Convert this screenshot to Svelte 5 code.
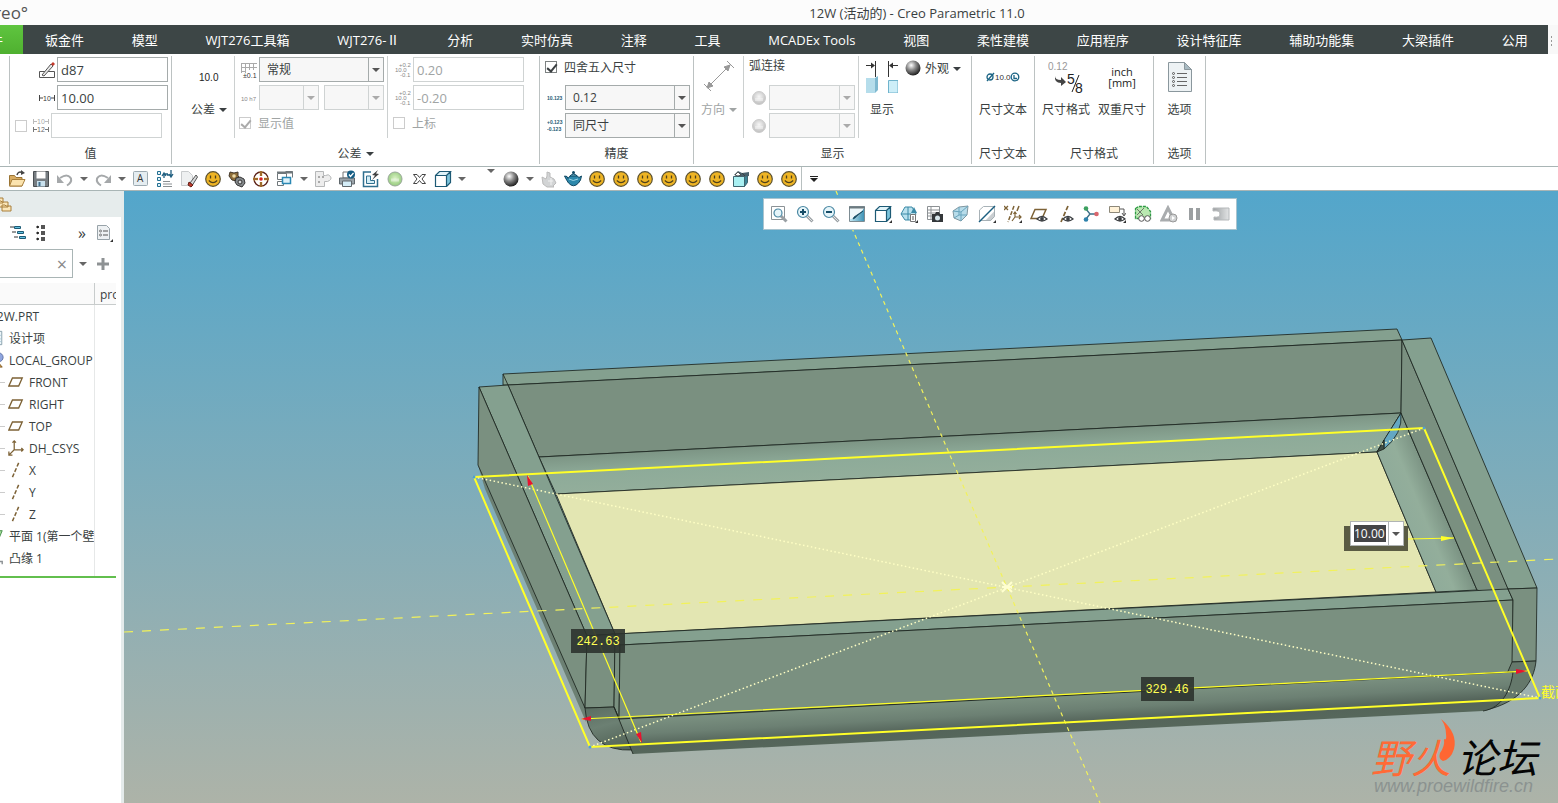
<script lang="ts">
	type Tool = { icon: string; title: string; kind?: 'caret' | 'high' };

	const tabs = [
		'钣金件', '模型', 'WJT276工具箱', 'WJT276-Ⅱ', '分析', '实时仿真', '注释', '工具', 'MCADEx Tools',
		'视图', '柔性建模', '应用程序', '设计特征库', '辅助功能集', '大梁插件', '公用'
	];

	const smile = '<circle cx="9" cy="9" r="7.3" fill="#eeb424" stroke="#5c5230" stroke-width="1.2"/><path d="M6.5 5.5v3M11.5 5.5v3" stroke="#4d411c" stroke-width="1.3"/><path d="M4.8 10.5q4.2 4.2 8.4 0" fill="none" stroke="#4d411c" stroke-width="1.1"/>';
	const cube = '<path d="M1.5 5.5h11v11h-11z" fill="#fff"/><path d="M1.5 5.5l4-4h11l-4 4z" fill="#dff3f9"/><path d="M12.500 5.500l4-4v11l-4 4z" fill="#7cc4dc"/><path d="M1.500 5.500h11v11h-11zl4-4h11l-4 4M16.500 1.500v11l-4 4" fill="none" stroke="#1d5a75" stroke-width="1.2"/>';
	const eye = '<path d="M7 14q5-5 10 0q-5 4-10 0z" fill="#fff" stroke="#3c3f42" stroke-width="1.3"/><circle cx="12" cy="14" r="1.900" fill="#3c3f42"/>';
	const corner = '<path d="M18 15v3h-3z" fill="#333"/>';
	const lens = '<path d="M11 11l5.500 5.500" stroke="#9aa0a4" stroke-width="3"/><path d="M11 11l5 5" stroke="#e2e5e6" stroke-width="1"/><circle cx="7" cy="7" r="5.500" fill="#e6f5fa" stroke="#4b88a3" stroke-width="1.200"/>';
	const plane = '<path d="M5 4.500h11l-4 9H1z" fill="none" stroke="#7d6236" stroke-width="1.500"/>';
	const axis = '<path d="M12 1L5 17" stroke="#7d6236" stroke-width="1.700" stroke-dasharray="4.500 2"/>';

	const icons: Record<string, string> = {
		smile,
		cube,
		plane,
		axis,
		open: '<path d="M1.500 16V5.500h5l1.500 2h6V16z" fill="#d8ac62" stroke="#9a7434"/><path d="M4 9.500h13L14 16H1.500z" fill="#fbe3ae" stroke="#a87f3b"/><path d="M9 5q1-4 5-2.500" fill="none" stroke="#444" stroke-width="1.500"/><path d="M13 0l4 3-4 2z" fill="#444"/>',
		save: '<path d="M1.500 1.500h15v15h-15z" fill="#777d82" stroke="#4a4f53"/><path d="M4.500 1.500h9v7h-9z" fill="#fff"/><path d="M5 11h8v5.500H5z" fill="#c9e1ee"/><path d="M6.500 12h2v4h-2z" fill="#44708e"/>',
		undo: '<path d="M4 8q8-5 11 0.500q1 4-4 7" fill="none" stroke="#a5a8aa" stroke-width="2"/><path d="M1 5v8h7z" fill="#a5a8aa"/>',
		redo: '<path d="M14 8q-8-5-11 0.500q-1 4 4 7" fill="none" stroke="#a5a8aa" stroke-width="2"/><path d="M17 5v8h-7z" fill="#a5a8aa"/>',
		letter: '<rect x="1.500" y="1.500" width="14" height="14" rx="1" fill="#e5edf1" stroke="#9caab1"/><text x="5" y="12" font-size="10" fill="#333">A</text>',
		regen: '<path d="M1.500 1.500h3v3h-3zM1.500 7.500h3v3h-3zM1.500 13.500h3v3h-3z" fill="#e3f3f9" stroke="#226f92"/><path d="M7 11.500h7M7 14h9M7 16.500h9" stroke="#8a8f92"/><path d="M8 8V4h4M6 6l2-3 2 3M15 0v5h-4M13 4l2 3 2-3" fill="none" stroke="#205f80" stroke-width="1.300"/>',
		erase: '<path d="M1.500 1.500h7l4 4v10h-11z" fill="#eef0f1" stroke="#c8cbcd"/><path d="M10 13l6-8 1.500 2-5 8z" fill="#d7d9da" stroke="#555"/><path d="M9 12l4 3-2 2-3-2z" fill="#c0392b" stroke="#632018"/>',
		gears: '<path d="M2 2l4 1 4-1v4l2 2-3 3-5-1-3-4z" fill="#8d6d38" stroke="#42372a"/><path d="M8 8l4-1 4 2 1 4-3 4-5-2-2-3z" fill="#84898c" stroke="#333"/><circle cx="6" cy="6" r="1.800" fill="#ecd9a6"/><circle cx="12" cy="12" r="2" fill="#d7dadc" stroke="#333"/>',
		target: '<circle cx="9" cy="9" r="7" fill="#fff" stroke="#5c2218" stroke-width="1.300"/><path d="M9 1v5M9 12v5M1 9h5M12 9h5" stroke="#e3b441" stroke-width="2.500"/><path d="M9 1v5M9 12v5M1 9h5M12 9h5" stroke="#5c2218"/><circle cx="9" cy="9" r="1.800" fill="#d42020"/>',
		windows: '<path d="M1.500 3.500h9v6h-9zM1.500 11.500h6v4h-6zM9.500 1.500h7v6" fill="#fff" stroke="#6f777b"/><path d="M1 2.500h16" stroke="#6f777b" stroke-width="2"/><path d="M6.500 7.500h8v6h-8z" fill="#def2fa" stroke="#2b88b4" stroke-width="1.500"/>',
		puzzle: '<path d="M1.500 1.500h8v4h2q3-2 5 1t-3 5h-3v5h-9z" fill="#ededed" stroke="#b5b7b8"/><path d="M4 6h2v2H4zM8 6h2v2H8zM4 11h2v2H4z" fill="#aaa"/>',
		print: '<path d="M5 2h8v6H5z" fill="#fff" stroke="#777"/><path d="M1.500 8h15v6h-15z" fill="#9aa3a9" stroke="#5f676c"/><path d="M4.500 11h9v5.500h-9z" fill="#d4edf8" stroke="#5f676c"/><circle cx="13" cy="4.500" r="4" fill="#155d84"/><path d="M11 4.500l1.500 2 3-3.500" fill="none" stroke="#fff" stroke-width="1.300"/>',
		flash: '<path d="M9 2H1.500v14.500h14V9" fill="#fff" stroke="#2f6f8f" stroke-width="1.500"/><path d="M4.500 6v7.500h8v-3h-4V6z" fill="#d3edf6" stroke="#2f6f8f"/><path d="M16 0l-6 5 3 .5-3 4.500 7-6-3-.5z" fill="#444"/>',
		green: '<circle cx="9" cy="9" r="7" fill="url(#ball-green)" stroke="#9aa89a"/><path d="M5 8.500h8v3H5z" fill="#fff" opacity=".45"/>',
		cross: '<path d="M3.500 4.500h3.500l2.500 3 2.500-3h3.500l-3.500 4.500 3.500 4.500h-3.500l-2.500-3-2.500 3H3.500L7 9z" fill="#fff" stroke="#444"/>',
		sphere: '<circle cx="9" cy="9" r="7.500" fill="url(#ball-dark)"/>',
		pot: '<path d="M2 7l4 2 1-3V2l3 1v4l4 2 2 4-3 3 1 1H7L3 14z" fill="#d2d4d5" stroke="#bbb"/><path d="M8 11h5M11 8v7" stroke="#f2f2f2"/>',
		teapot: '<path d="M0.500 6l2.500 .5 1 2q1-3 5-3.500t6 2.500l2.500-1.500-1 4-2 3q-5 5.500-10 0Q3 11 .500 6z" fill="#2d88ab" stroke="#114863"/><path d="M6 6q3.500-4 7 0z" fill="#7ac0d8" stroke="#114863"/><circle cx="9.500" cy="2.500" r="1.500" fill="#114863"/><path d="M5 9q4 3 9 0" stroke="#9ad4e6" fill="none"/>',
		paint: '<path d="M1.500 6.500h11v10h-11z" fill="#a9f0f2" stroke="#3d6570"/><path d="M12.500 6.500l3-3v9l-3 4z" fill="#3b8396" stroke="#3d6570"/><path d="M2 5l4-4 4 2 7-1v4l-6 1z" fill="#48606b"/><path d="M3 5l3-3 3 3-3 1zM10 3l3 3" fill="#fff" stroke="#333" stroke-width=".7"/>',
		fit: '<path d="M1.500 1.500h13v13h-13z" fill="#fff" stroke="#8b9296"/><path d="M11 11l5.500 5.500" stroke="#9aa0a4" stroke-width="3"/><circle cx="8" cy="8" r="4" fill="#e6f5fa" stroke="#4b88a3" stroke-width="1.200"/>',
		zoomin: lens + '<path d="M4 7h6M7 4v6" stroke="#164d68" stroke-width="2"/>',
		zoomout: lens + '<path d="M4 7h6" stroke="#164d68" stroke-width="2"/>',
		repaint: '<path d="M1.500 1.500h15v15h-15z" fill="#eef7fa" stroke="#7d8c93"/><path d="M2 14q8 1 14-11v13H2z" fill="url(#blue)"/><path d="M1 2.500h16" stroke="#6d7a80" stroke-width="2"/><path d="M15 6l-8 7-2 1 1-2z" fill="#124a63" stroke="#124a63" stroke-width=".8"/>',
		shade: cube + corner,
		saved: '<path d="M1 9l4-7h7l4 7-4 6H5z" fill="#b9e1ee" stroke="#3b89a6"/><path d="M1 9h10M8 2v13" stroke="#3b89a6"/><path d="M11 8l3-6 3 6z" fill="#3b89a6"/><path d="M10.500 16.500v-7h5v7z" fill="#fff" stroke="#777"/><path d="M12 12h2M12 14h2" stroke="#555"/>' + corner,
		camera: '<path d="M1.500 1.500h12v13h-12zM1.500 5h12M1.500 8h12M1.500 11h12M5 1.500v13" fill="#fff" stroke="#8c9194"/><path d="M6 9h3l1-2h3l1 2h3v8H6z" fill="#33373a"/><circle cx="11.500" cy="13" r="2.500" fill="#d7e6ec"/>',
		persp: '<path d="M1 6l6-4 9-1-1 9-6 6-7-3z" fill="#b7dcea" stroke="#8197a0"/><path d="M1 6l8 1 7-6M9 7v9M7 2v8l8 0M7 10l-5 3" fill="none" stroke="#68a4bd"/>',
		section: '<path d="M1.500 5l4-3.500h11v10l-4 4h-11z" fill="#fff" stroke="#a8b2b7"/><path d="M7 16l9.500-10v6l-4 4z" fill="#a5aeb2" opacity=".6"/><path d="M1 17L17 1" stroke="#1b5e80" stroke-width="1.500"/>' + corner,
		datum: '<path d="M0 1l4 4M4 1L0 5" stroke="#7d6236" stroke-width="1.300"/><path d="M10 1L4 17" stroke="#7d6236" stroke-width="1.500" stroke-dasharray="4 1.500"/><path d="M15 1l-2 5" stroke="#7d6236" stroke-width="1.500"/><path d="M11 7v5h6M11 12l-3 4M9.500 9l1.500-2 1.500 2M15 10l2 2-2 2" fill="none" stroke="#7d6236" stroke-width="1.200"/>' + corner,
		planeeye: plane + eye,
		axiseye: axis + eye,
		spin: '<path d="M4 4l4 5-4 5M8 9h6" fill="none" stroke="#3d6f86" stroke-width="1.400"/><circle cx="4" cy="3.500" r="2.300" fill="#3da060"/><circle cx="4" cy="14.500" r="2.300" fill="#2e82ac"/><circle cx="14.500" cy="9" r="2.300" fill="#d9666d"/>',
		annot: '<path d="M1.500 1.500h10v6h-10z" fill="#fff2d8" stroke="#8d8879"/><path d="M12 4h4v6M14 8l2 3 2-3" fill="none" stroke="#555"/>' + eye + corner,
		simlook: '<path d="M1.500 3.500l3-2h8l4 5v7h-15z" fill="#b9e9b0" stroke="#2f9a45" stroke-width="1.300" stroke-dasharray="3 1"/><path d="M3 4l6 6M3 10l7-7" stroke="#555" stroke-width=".8"/><circle cx="7.500" cy="13.500" r="2.800" fill="#fff" stroke="#555"/><circle cx="13.500" cy="13.500" r="2.800" fill="#fff" stroke="#555"/>',
		sim: '<path d="M8 3L2 15h12z" fill="none" stroke="#a9acae" stroke-width="3"/><circle cx="13" cy="13" r="4" fill="#d0d2d3" stroke="#999"/><path d="M12 11l3 2-3 2z" fill="#fff"/>',
		pause: '<path d="M3 3h4v12H3zM10 3h4v12h-4z" fill="#9b9fa1"/>',
		exit: '<path d="M1 3h16v12H2v-3q6 1 6-3T1 6z" fill="url(#gray)" stroke="#b5b8ba"/>'
	};

	const smiles = (n: number): Tool[] => Array.from({ length: n }, () => ({ icon: 'smile', title: '用户命令' }));
	const caret = (title: string): Tool => ({ icon: '', title, kind: 'caret' });

	const quick: Tool[] = [
		{ icon: 'open', title: '打开' },
		{ icon: 'save', title: '保存' },
		{ icon: 'undo', title: '撤消' },
		caret('撤消列表'),
		{ icon: 'redo', title: '重做' },
		caret('重做列表'),
		{ icon: 'letter', title: '文本' },
		{ icon: 'regen', title: '重新生成' },
		{ icon: 'erase', title: '拭除' },
		...smiles(1),
		{ icon: 'gears', title: '设置' },
		{ icon: 'target', title: '定位' },
		{ icon: 'windows', title: '窗口' },
		caret('窗口列表'),
		{ icon: 'puzzle', title: '元件' },
		{ icon: 'print', title: '打印' },
		{ icon: 'flash', title: '快速绘图' },
		{ icon: 'green', title: '状态' },
		{ icon: 'cross', title: '关闭' },
		{ icon: 'cube', title: '显示样式' },
		caret('显示样式列表'),
		{ icon: '', title: '更多', kind: 'high' },
		{ icon: 'sphere', title: '外观' },
		caret('外观列表'),
		{ icon: 'pot', title: '场景' },
		{ icon: 'teapot', title: '渲染' },
		...smiles(6),
		{ icon: 'paint', title: '涂色' },
		...smiles(2)
	];

	const viewTools: Tool[] = [
		{ icon: 'fit', title: '重新调整' },
		{ icon: 'zoomin', title: '放大' },
		{ icon: 'zoomout', title: '缩小' },
		{ icon: 'repaint', title: '重画' },
		{ icon: 'shade', title: '显示样式' },
		{ icon: 'saved', title: '已保存方向' },
		{ icon: 'camera', title: '视图管理器' },
		{ icon: 'persp', title: '透视图' },
		{ icon: 'section', title: '截面' },
		{ icon: 'datum', title: '基准显示' },
		{ icon: 'planeeye', title: '平面显示' },
		{ icon: 'axiseye', title: '轴显示' },
		{ icon: 'spin', title: '旋转中心' },
		{ icon: 'annot', title: '注释显示' },
		{ icon: 'simlook', title: '仿真显示' },
		{ icon: 'sim', title: '仿真' },
		{ icon: 'pause', title: '暂停' },
		{ icon: 'exit', title: '退出' }
	];

	const tree = [
		{ label: '设计项', icon: 'list' },
		{ label: 'LOCAL_GROUP', icon: 'group' },
		{ label: 'FRONT', icon: 'plane', deep: true },
		{ label: 'RIGHT', icon: 'plane', deep: true },
		{ label: 'TOP', icon: 'plane', deep: true },
		{ label: 'DH_CSYS', icon: 'csys', deep: true },
		{ label: 'X', icon: 'axis', deep: true },
		{ label: 'Y', icon: 'axis', deep: true },
		{ label: 'Z', icon: 'axis', deep: true },
		{ label: '平面 1(第一个壁)', icon: 'wall' },
		{ label: '凸缘 1', icon: 'flange' }
	];

	const treeIcons: Record<string, string> = {
		plane,
		axis,
		list: '<path d="M1.500 1.500h14v15h-14z" fill="#eef6fa" stroke="#7f9aa6"/><path d="M8 6h6M8 10h6M8 13h6" stroke="#5a9ab8"/>',
		group: '<circle cx="12" cy="6" r="5" fill="#8fa6e0" stroke="#5a6da0"/><path d="M9 17l2-6 5 6z" fill="#d19a48" stroke="#7a5620"/>',
		csys: '<path d="M7 1v10h10M7 11l-6 6M5 3l2-2 2 2M15 9l2 2-2 2M1 13v4h4" fill="none" stroke="#7d6236" stroke-width="1.400"/>',
		wall: '<path d="M10 3h6l-5 12H5z" fill="#a8dc9d" stroke="#3f8b43"/>',
		flange: '<path d="M5 4v9h11v3" fill="none" stroke="#8d9295" stroke-width="1.600"/>'
	};

	let name = $state('d87');
	let value = $state('10.00');
	let flangeValue = $state('10.00');
	let rounded = $state(true);
</script>

{#snippet glyph(inner: string)}
	<svg class="glyph" viewBox="0 0 18 18" aria-hidden="true">{@html inner}</svg>
{/snippet}

{#snippet combo(label: string, options: string[], size: string, disabled: boolean)}
	<span class="combo {size}" class:disabled>
		<select aria-label={label} {disabled}>
			{#each options as option (option)}
				<option>{option}</option>
			{/each}
		</select>
	</span>
{/snippet}

{#snippet stacked()}
	<svg class="mini" viewBox="0 0 16 16" aria-hidden="true">
		<g fill="#888" font-size="6"><text x="4" y="5">+0.2</text><text x="0" y="10">10.0</text><text x="5" y="15">-0.1</text></g>
	</svg>
{/snippet}

<svg class="defs" aria-hidden="true">
	<defs>
		<radialGradient id="ball-dark" cx=".38" cy=".32" r=".7">
			<stop offset="0" stop-color="#fff" />
			<stop offset=".45" stop-color="#8c8c8c" />
			<stop offset="1" stop-color="#1c1c1c" />
		</radialGradient>
		<radialGradient id="ball-green" cx=".5" cy=".45" r=".6">
			<stop offset="0" stop-color="#d9f2c4" />
			<stop offset="1" stop-color="#8fc777" />
		</radialGradient>
		<radialGradient id="ball-gray" cx=".5" cy=".4" r=".65">
			<stop offset="0" stop-color="#f7f7f7" />
			<stop offset="1" stop-color="#b9b9b9" />
		</radialGradient>
		<linearGradient id="blue" x1="0" x2="1">
			<stop offset="0" stop-color="#c3e9f5" />
			<stop offset="1" stop-color="#3f93b5" />
		</linearGradient>
		<linearGradient id="gray" x1="0" x2="1">
			<stop offset="0" stop-color="#9b9fa1" />
			<stop offset="1" stop-color="#e2e4e5" />
		</linearGradient>
	</defs>
</svg>

<div class="app">
	<header class="titlebar">
		<span class="brand">creo°</span>
		<h1>12W (活动的) - Creo Parametric 11.0</h1>
	</header>

	<nav class="tabs">
		<button class="file">文件</button>
		<div class="tab-list">
			{#each tabs as tab (tab)}
				<button class="tab">{tab}</button>
			{/each}
		</div>
		<span class="grip"></span>
	</nav>

	<section class="ribbon">
		<div class="group edge"></div>

		<div class="group">
			<div class="body">
				<div class="rows value">
					<label class="row indent">
						<svg class="mini" viewBox="0 0 16 16" aria-hidden="true">
							<path d="M0.500 9.500h15v6H.5z" fill="#fff" stroke="#555" />
							<path d="M3 13l9-11 2 2-9 10z" fill="#e8e8e8" stroke="#555" />
							<path d="M12 2l2-2 2 2-2 2z" fill="#c4392b" />
						</svg>
						<input class="field" aria-label="名称" bind:value={name} />
					</label>
					<label class="row indent">
						<svg class="mini" viewBox="0 0 16 16" aria-hidden="true">
							<path d="M.5 5v6M15.500 5v6M1 8h3M12 8h3" stroke="#444" />
							<text x="4" y="11" font-size="7" fill="#333">10</text>
						</svg>
						<input class="field" aria-label="值" bind:value />
					</label>
					<div class="row override">
						<input type="checkbox" aria-label="覆盖值" disabled />
						<svg class="mini" viewBox="0 0 16 16" aria-hidden="true">
							<path d="M.5 1v5M15.500 1v5M1 3.500h3M12 3.500h3" stroke="#bbb" />
							<path d="M.5 9v5M15.500 9v5M1 11.500h3M12 11.500h3" stroke="#777" />
							<text x="4" y="6" font-size="7" fill="#aaa">10</text>
							<text x="4" y="14" font-size="7" fill="#666">12</text>
						</svg>
						<input class="field" aria-label="覆盖文本" disabled />
					</div>
				</div>
			</div>
			<h2>值</h2>
		</div>

		<div class="group">
			<div class="body">
				<button class="big tolerance">
					<span class="art"><svg width="22" height="16" viewBox="0 0 22 16"><text x="1" y="12" font-size="10" fill="#222">10.0</text></svg></span>
					<span class="drop">公差</span>
				</button>
				<div class="rows tol">
					<div class="row">
						<svg class="mini" viewBox="0 0 16 16" aria-hidden="true">
							<path d="M0 1.500h16M0 5.500h16M.5 1v10M4.500 1v10M8.500 1v7M12.500 1v7M0 9.500h4" stroke="#aaa" />
							<text x="2" y="16" font-size="7" fill="#333">±0.1</text>
						</svg>
						{@render combo('公差模式', ['常规'], 'wide', false)}
					</div>
					<div class="row">
						<svg class="mini" viewBox="0 0 16 16" aria-hidden="true"><text x="0" y="11" font-size="6" fill="#888">10 h7</text></svg>
						{@render combo('公差表', [], 'half', true)}
						{@render combo('公差等级', [], 'half', true)}
					</div>
					<label class="check muted"><input type="checkbox" checked disabled />显示值</label>
				</div>
				<div class="rows limits">
					<label class="row">{@render stacked()}<input class="field" aria-label="上公差" value="0.20" disabled /></label>
					<label class="row">{@render stacked()}<input class="field" aria-label="下公差" value="-0.20" disabled /></label>
					<label class="check muted"><input type="checkbox" disabled />上标</label>
				</div>
			</div>
			<h2 class="drop">公差</h2>
		</div>

		<div class="group">
			<div class="body">
				<div class="rows precision">
					<label class="check"><input type="checkbox" bind:checked={rounded} />四舍五入尺寸</label>
					<div class="row">
						<svg class="mini" viewBox="0 0 16 16" aria-hidden="true"><text x="0" y="10" font-size="5" font-weight="bold" fill="#1d5a75">10.123</text></svg>
						{@render combo('小数位数', ['0.12'], 'wide', false)}
					</div>
					<div class="row">
						<svg class="mini" viewBox="0 0 16 16" aria-hidden="true"><g font-size="5" font-weight="bold" fill="#1d5a75"><text x="0" y="6">+0.123</text><text x="0" y="13">-0.123</text></g></svg>
						{@render combo('公差小数位数', ['同尺寸'], 'wide', false)}
					</div>
				</div>
			</div>
			<h2>精度</h2>
		</div>

		<div class="group">
			<div class="body">
				<button class="big direction muted" disabled>
					<span class="art">
						<svg width="32" height="32" viewBox="0 0 32 32" fill="none" stroke="#999">
							<path d="M4 27L27 4M24 0l7 7M1 23l7 7" />
							<path d="M4 27l2-6 4 4zM27 4l-2 6-4-4z" fill="#999" />
						</svg>
					</span>
					<span class="drop">方向</span>
				</button>
				<div class="rows arc">
					<span class="caption">弧连接</span>
					{#each ['弧连接一', '弧连接二'] as label (label)}
						<div class="row">
							<svg class="ball" viewBox="0 0 14 14" aria-hidden="true"><circle cx="7" cy="7" r="6.500" fill="url(#ball-gray)" stroke="#ccc" /><path d="M3 7h8v3H3z" fill="#fff" opacity=".4" /></svg>
							{@render combo(label, [], 'arc-size', true)}
						</div>
					{/each}
				</div>
				<div class="show">
					<button class="big">
						<span class="art">
							<svg width="32" height="32" viewBox="0 0 32 32">
								<path d="M9.500 0v16M22.500 0v16M0 4.500h8M24 4.500h8" stroke="#333" />
								<path d="M9 4.500l-4-3v6zM23 4.500l4-3v6z" fill="#333" />
								<path d="M0 17h9v15H0z" fill="#b5ddeb" /><path d="M9 17l3-2v14l-3 3z" fill="#7fb9d0" />
								<path d="M22.500 19.500H32V32h-9.500z" fill="#cdeef8" stroke="#6fb3cc" />
							</svg>
						</span>
						<span>显示</span>
					</button>
					<button class="look">{@render glyph(icons.sphere)}<span class="drop">外观</span></button>
				</div>
			</div>
			<h2>显示</h2>
		</div>

		<div class="group">
			<div class="body">
				<button class="big text">
					<span class="art">
						<svg width="34" height="14" viewBox="0 0 34 14">
							<g fill="none" stroke="#1d6585" stroke-width="1.300"><circle cx="4" cy="7" r="3" /><path d="M1 11L8 3" /><circle cx="29" cy="7" r="3.800" /><path d="M28 5v3.500h3" /></g>
							<text x="9" y="10" font-size="8" fill="#333">10.0</text>
						</svg>
					</span>
					<span>尺寸文本</span>
				</button>
			</div>
			<h2>尺寸文本</h2>
		</div>

		<div class="group">
			<div class="body format">
				<button class="big">
					<span class="art">
						<svg width="36" height="34" viewBox="0 0 36 34">
							<text x="0" y="10" font-size="10" fill="#999">0.12</text>
							<path d="M7 16q0 4 6 4v-3l5 5-5 4v-3q-7 0-6-7z" fill="#444" />
							<text x="19" y="24" font-size="14" fill="#222">5</text>
							<text x="27" y="33" font-size="14" fill="#222">8</text>
							<path d="M31 15l-7 17" stroke="#222" />
						</svg>
					</span>
					<span>尺寸格式</span>
				</button>
				<button class="big">
					<span class="art units"><span>inch</span><span>[mm]</span></span>
					<span>双重尺寸</span>
				</button>
			</div>
			<h2>尺寸格式</h2>
		</div>

		<div class="group">
			<div class="body">
				<button class="big options">
					<span class="art">
						<svg width="26" height="32" viewBox="0 0 26 32">
							<path d="M1.500 1.500h16l7 7v22h-23z" fill="#edf2f4" stroke="#8a979d" />
							<path d="M17.500 1.500v7h7z" fill="#a8bac2" stroke="#8a979d" />
							<path d="M10 12.500h10M10 16.500h10M10 20.500h10M10 24.500h10" stroke="#666" />
							<g fill="none" stroke="#555"><circle cx="6.500" cy="12.500" r="1" /><circle cx="6.500" cy="16.500" r="1" /><circle cx="6.500" cy="20.500" r="1" /><circle cx="6.500" cy="24.500" r="1" /></g>
						</svg>
					</span>
					<span>选项</span>
				</button>
			</div>
			<h2>选项</h2>
		</div>
	</section>

	<div class="quickbar">
		{#each quick as tool, i (i)}
			{#if tool.kind}
				<button class={tool.kind} title={tool.title} aria-label={tool.title}></button>
			{:else}
				<button class="tool" title={tool.title} aria-label={tool.title}>{@render glyph(icons[tool.icon])}</button>
			{/if}
		{/each}
		<button class="more" title="自定义快速访问工具栏" aria-label="自定义快速访问工具栏">
			<svg width="8" height="6" viewBox="0 0 8 6"><path d="M0 0h8v1H0zM0 2h8L4 6z" fill="#222" /></svg>
		</button>
	</div>

	<main>
		<aside>
			<div class="panel-top">
				<svg width="18" height="18" viewBox="0 0 18 18" fill="#fbe6b8" stroke="#a87f3b" aria-hidden="true">
					<path d="M-6 5V1h3l1 1h5v5h-9zM-2 9V5h3l1 1h6v5h-10zM2 15V9h3l1 1h5v5z" />
				</svg>
			</div>
			<div class="panel-tools">
				<button aria-label="展开树">
					<svg width="18" height="18" viewBox="0 0 18 18"><path d="M5.500 2.500h6v2h-6zM8.500 7.500h6v2h-6zM10.500 12.500h6v2h-6z" fill="#62c0e0" stroke="#1d5a75" /><path d="M1 3h4M3 8h4M5 13h4" stroke="#333" /></svg>
				</button>
				<button aria-label="折叠树">
					<svg width="18" height="18" viewBox="0 0 18 18"><path d="M9 1h4v4H9zM9 7h4v4H9zM9 13h4v4H9z" fill="#555" /><path d="M5 2l2 1-2 1zM5 8l2 1-2 1zM5 14l2 1-2 1z" fill="#222" stroke="#222" /></svg>
				</button>
				<button class="expand" aria-label="更多">»</button>
				<button aria-label="树设置">
					<svg width="18" height="18" viewBox="0 0 18 18"><path d="M1.500 1.500h9l3 3v11h-12z" fill="#eef1f3" stroke="#98a3a9" /><path d="M7 7h5M7 11h5" stroke="#555" /><circle cx="4.500" cy="7" r="1" fill="none" stroke="#777" /><circle cx="4.500" cy="11" r="1" fill="none" stroke="#777" /><path d="M17 15v3h-3z" fill="#333" /></svg>
				</button>
			</div>
			<div class="search">
				<div class="search-box">
					<input aria-label="搜索树" />
					<button aria-label="清除">×</button>
				</div>
				<button class="caret" aria-label="筛选"></button>
				<button class="plus" aria-label="添加列">
					<svg width="12" height="12" viewBox="0 0 12 12"><path d="M6 0v12M0 6h12" stroke="#8e9294" stroke-width="3" /></svg>
				</button>
			</div>
			<div class="tree">
				<div class="tree-head"><span></span><span>pro_</span></div>
				<div class="tree-body">
					<ul>
						<li class="root">12W.PRT</li>
						{#each tree as node (node.label)}
							<li class:deep={node.deep}>
								{@render glyph(treeIcons[node.icon])}
								<span>{node.label}</span>
							</li>
						{/each}
					</ul>
				</div>
			</div>
		</aside>

		<div class="viewport">
			<svg class="scene" viewBox="124 191 1434 612" preserveAspectRatio="xMidYMid slice" role="img" aria-label="12W">
				<defs>
					<linearGradient id="sky" x1="0" y1="0" x2="0" y2="1">
						<stop offset="0" stop-color="#53a6cb" />
						<stop offset="1" stop-color="#adb3a8" />
					</linearGradient>
					<linearGradient id="bend-back" gradientUnits="userSpaceOnUse" x1="960" y1="435" x2="962" y2="474">
						<stop offset="0" stop-color="#7c9484" />
						<stop offset=".5" stop-color="#8eab99" />
						<stop offset="1" stop-color="#93ae9b" />
					</linearGradient>
					<linearGradient id="bend-right" gradientUnits="userSpaceOnUse" x1="1440" y1="505" x2="1404" y2="520">
						<stop offset="0" stop-color="#7c9484" />
						<stop offset=".5" stop-color="#93ae9b" />
						<stop offset="1" stop-color="#8fab9a" />
					</linearGradient>
					<linearGradient id="bend-front" gradientUnits="userSpaceOnUse" x1="1060" y1="696" x2="1062" y2="732">
						<stop offset="0" stop-color="#7a9080" />
						<stop offset=".4" stop-color="#6c8073" />
						<stop offset=".75" stop-color="#54645a" />
						<stop offset="1" stop-color="#56675b" />
					</linearGradient>
					<linearGradient id="cap" x1="0" y1="0" x2=".3" y2="1">
						<stop offset="0" stop-color="#5a6c60" />
						<stop offset=".5" stop-color="#6c8073" />
						<stop offset="1" stop-color="#56675b" />
					</linearGradient>
				</defs>
				<rect x="124" y="191" width="1434" height="612" fill="url(#sky)" />

				<g class="solid">
					<path d="M478 465L485 489L586 722L586 708Z" fill="#6c8073" stroke="none" />
					<path d="M503 374L1397 329L1402 340L508 385L503 385Z" fill="#84a08f" />
					<path d="M508 385L1402 340L1401 413L539 457Z" fill="#7a9080" />
					<path d="M539 457L1401 413L1377 452L556 494Z" fill="url(#bend-back)" />
					<path d="M556 494L1377 452L1436 592L615 634Z" fill="#e3e6b2" />
					<path d="M1377 452L1401 413L1477 590L1436 592Z" fill="url(#bend-right)" />
					<path d="M1402 340L1513 600L1477 590L1401 413Z" fill="#7a9080" />
					<path d="M1402 340L1431 338L1537 588L1508 589Z" fill="#84a08f" />
					<path d="M1401 413L1384 440L1384 449Q1403 434 1401 413Z" fill="#64a7c2" />
					<path d="M1377 452L1384 440L1384 449Z" fill="#415047" />
					<path d="M479 387L508 385L615 634L587 636Z" fill="#84a08f" />
					<path d="M503 374L508 385" />
					<path d="M479 387L478 465L585 708L587 636Z" fill="#7a9080" />
					<path d="M587 636L615 634L1508 589L1513 600L620 645L615 634Z" fill="#84a08f" />
					<path d="M587 636L615 634L614 707L585 708Z" fill="#7a9080" />
					<path d="M615 634L620 645L619 719L614 707Z" fill="#7a9080" />
					<path d="M585 708L614 707L633 750Q588 752 585 708Z" fill="url(#cap)" />
					<path d="M620 645L1513 600L1513 672L619 719Z" fill="#7a9080" />
					<path d="M1508 589L1537 588L1536 661L1512 662L1513 600Z" fill="#7a9080" />
					<path d="M1512 662L1536 661C1534 682 1520 702 1486 710L1500 690Z" fill="#65786b" />
					<path d="M619 719L1513 672C1511 690 1502 708 1483 711L633 754L614 707Z" fill="url(#bend-front)" stroke="none" />
					<path d="M614 707L633 754M619 719L1513 672C1511 690 1502 708 1483 711" fill="none" />
				</g>

				<g class="axes">
					<path d="M124 632L1558 559" stroke-dasharray="9 9" />
					<path d="M836 191L1100 803" stroke-dasharray="4 4" />
				</g>
				<path class="diagonals" d="M474 477L1540 698M1424 428L590 747" />
				<path class="outline" d="M474 477L1424 428L1540 698L590 747Z" />
				<g fill="#4d9fd6">
					<circle cx="474" cy="477" r="1.500" />
					<circle cx="1424" cy="428" r="1.500" />
					<circle cx="1540" cy="698" r="1.500" />
					<circle cx="590" cy="747" r="1.500" />
				</g>
				<path d="M1002 582l10 10M1012 582l-10 10M1002 587h10" stroke="#ffffd0" stroke-width="2" />

				<path class="dimension" d="M528 476L641 742M582 719L1527 671M1408 539L1454 538" />
				<path d="M527 475l1 11 5-2zM642 743l-6-9 5-2zM581 719l10-3v5zM1527 671l-11-2v5z" fill="#e8132f" />
				<path d="M1454 538l-13-2v5z" fill="#ffff28" />
				<rect class="tag" x="571" y="629" width="54" height="24" />
				<rect class="tag" x="1141" y="677" width="53" height="24" />
				<text class="tag-text" x="598" y="645">242.63</text>
				<text class="tag-text" x="1167" y="693">329.46</text>
				<text class="section-name" x="1541" y="697">截面</text>

				<g class="watermark">
					<text x="1371" y="773" fill="#ff6a36">野火</text>
					<text x="1457" y="773" fill="#050505">论坛</text>
					<path d="M1441 719q17 14 13 30q-3 10-11 12q-5-2-3-8q5-7 4-14q3 2 2-5q0-8-5-15z" fill="#ff6633" />
					<text class="site" x="1374" y="792">www.proewildfire.cn</text>
				</g>
			</svg>

			<div class="view-tools">
				{#each viewTools as tool (tool.icon)}
					<button title={tool.title} aria-label={tool.title}>{@render glyph(icons[tool.icon])}</button>
				{/each}
			</div>

			<div class="edit-shadow"></div>
			<div class="edit">
				<input aria-label="凸缘尺寸" bind:value={flangeValue} />
				<button aria-label="最近值"></button>
			</div>
		</div>
	</main>
</div>

<style>
	:global(body) {
		margin: 0;
		overflow: hidden;
	}
	* {
		box-sizing: border-box;
	}
	.app {
		display: flex;
		flex-direction: column;
		height: 100vh;
		overflow: hidden;
		background: #fff;
		color: #3a3f41;
		font-family: "Open Sans", "Noto Sans CJK SC", sans-serif;
		font-size: 12px;
	}
	button, input, select {
		font: inherit;
		color: inherit;
		margin: 0;
	}
	button {
		padding: 0;
		border: 0;
		background: none;
	}
	.defs {
		position: absolute;
		width: 0;
		height: 0;
	}
	.glyph {
		width: 18px;
		height: 18px;
		flex-shrink: 0;
	}

	.titlebar {
		display: flex;
		align-items: center;
		height: 25px;
		flex-shrink: 0;
		background: #fcfcfc;
	}
	.brand {
		width: 276px;
		margin-left: -14px;
		font-size: 17px;
		line-height: 24px;
		color: #555;
	}
	h1 {
		flex: 1;
		margin: 0;
		padding-left: 14px;
		font-size: 13px;
		font-weight: 400;
		text-align: center;
	}

	.tabs {
		display: flex;
		height: 29px;
		flex-shrink: 0;
		background: #3d4646;
		color: #fff;
		font-size: 13px;
	}
	.file {
		display: flex;
		align-items: center;
		justify-content: flex-end;
		width: 23px;
		padding-right: 20px;
		overflow: hidden;
		white-space: nowrap;
		background: linear-gradient(#5fc53f, #4fb030);
	}
	.tab-list {
		display: flex;
		flex: 1;
		justify-content: space-between;
		padding: 0 20px 0 22px;
	}
	.tab {
		white-space: nowrap;
	}
	.grip {
		width: 10px;
		background: #f8f8f8 repeating-linear-gradient(#999 0 2px, #f8f8f8 2px 4px) 3px 11px / 1px 10px no-repeat;
	}

	.ribbon {
		display: flex;
		height: 113px;
		flex-shrink: 0;
		padding: 2px 0;
		border-bottom: 1px solid #a9b5b5;
	}
	.group {
		display: flex;
		flex-direction: column;
		flex-shrink: 0;
		border-right: 1px solid #bcc2c2;
	}
	.edge {
		width: 10px;
	}
	.body {
		display: flex;
		height: 82px;
	}
	h2 {
		margin: 6px 0 0;
		font-size: 12px;
		font-weight: 400;
		line-height: 20px;
		text-align: center;
	}
	.rows {
		display: grid;
		grid-template-rows: repeat(3, 25px);
		gap: 3px;
		padding: 1px 3px 0 7px;
	}
	.rows + .rows, .big + .rows, .rows + .show {
		border-left: 1px solid #ccd0d0;
	}
	.row {
		display: flex;
		align-items: center;
		gap: 2px;
	}
	.value {
		padding-left: 5px;
	}
	.indent {
		padding-left: 24px;
	}
	.override .mini {
		margin-left: 4px;
	}
	.tol {
		padding-left: 6px;
	}
	.limits {
		padding-right: 15px;
	}
	.mini {
		width: 16px;
		height: 16px;
		flex-shrink: 0;
		font-family: "Liberation Sans", sans-serif;
	}
	.field {
		width: 111px;
		height: 25px;
		padding: 0 3px;
		border: 1px solid #a5abab;
		background: #fff;
		font-size: 13px;
	}
	.field:disabled {
		border-color: #cfd3d3;
		color: #a0a4a4;
	}
	.combo {
		position: relative;
		display: block;
		height: 25px;
	}
	.combo select {
		appearance: none;
		width: 100%;
		height: 25px;
		padding: 0 20px 0 7px;
		border: 1px solid #a5abab;
		border-radius: 0;
		background: #f7f7f7;
		opacity: 1;
	}
	.combo::before {
		content: "";
		position: absolute;
		top: 0;
		right: 15px;
		height: 25px;
		border-left: 1px solid #a5abab;
	}
	.combo::after {
		content: "";
		position: absolute;
		top: 11px;
		right: 4px;
		border: 4px solid transparent;
		border-top-color: #555;
		border-bottom: 0;
	}
	.combo.disabled select, .combo.disabled::before {
		border-color: #cfd3d3;
	}
	.combo.disabled::after {
		border-top-color: #aaa;
	}
	.wide {
		width: 125px;
	}
	.half {
		width: 60px;
	}
	.half + .half {
		margin-left: 3px;
	}
	.arc-size {
		width: 86px;
	}
	.check {
		display: flex;
		align-items: center;
		gap: 7px;
		height: 19px;
		margin-left: -2px;
		white-space: nowrap;
	}
	input[type="checkbox"] {
		appearance: none;
		position: relative;
		width: 12px;
		height: 12px;
		flex-shrink: 0;
		border: 1px solid #7d8282;
		background: #fff;
	}
	input[type="checkbox"]:disabled {
		border-color: #ccc;
		color: #aaa;
	}
	input[type="checkbox"]:checked::before {
		content: "";
		position: absolute;
		left: 3px;
		top: 0;
		width: 4px;
		height: 8px;
		border: solid currentColor;
		border-width: 0 2px 2px 0;
		transform: rotate(40deg);
	}
	.muted {
		color: #a0a4a4;
	}
	.big {
		display: flex;
		flex-direction: column;
		align-items: center;
		line-height: 24px;
		white-space: nowrap;
	}
	.art {
		display: flex;
		align-items: center;
		justify-content: center;
		height: 42px;
		font-family: "Liberation Sans", sans-serif;
	}
	.drop::after {
		content: "";
		display: inline-block;
		margin-left: 4px;
		vertical-align: 2px;
		border: 4px solid transparent;
		border-top-color: currentColor;
		border-bottom: 0;
	}
	.tolerance {
		padding: 0 7px 0 19px;
	}
	.direction {
		padding: 0 6px 0 7px;
	}
	.arc {
		padding-left: 5px;
	}
	.arc .row {
		gap: 3px;
		padding-left: 3px;
	}
	.caption {
		line-height: 18px;
	}
	.ball {
		width: 14px;
		height: 14px;
	}
	.show {
		display: flex;
		gap: 6px;
		padding: 0 10px 0 7px;
	}
	.look {
		display: flex;
		align-items: center;
		height: 24px;
		gap: 3px;
		white-space: nowrap;
	}
	.text {
		padding: 0 7px;
	}
	.format {
		gap: 8px;
		padding: 0 7px;
	}
	.units {
		flex-direction: column;
		color: #222;
		font-family: "Open Sans", sans-serif;
		font-size: 11px;
		line-height: 11px;
	}
	.options {
		width: 51px;
	}

	.quickbar {
		display: flex;
		align-items: center;
		height: 24px;
		flex-shrink: 0;
		padding-left: 5px;
		border-bottom: 1px solid #a9b5b5;
	}
	.tool {
		display: flex;
		align-items: center;
		justify-content: center;
		width: 24px;
		height: 22px;
	}
	.caret, .high, .more {
		display: flex;
		align-items: center;
		justify-content: center;
		width: 14px;
		height: 22px;
	}
	.caret::before, .high::before {
		content: "";
		border: 4px solid transparent;
		border-top-color: #666;
		border-bottom: 0;
	}
	.high {
		align-items: flex-start;
		justify-content: flex-end;
		width: 30px;
		padding: 1px 4px 0 0;
	}
	.more {
		width: 24px;
		height: 23px;
		border-left: 1px solid #b8c0c0;
	}

	main {
		display: flex;
		flex: 1;
		min-height: 0;
	}
	aside {
		width: 124px;
		flex-shrink: 0;
		overflow: hidden;
		border-right: 3px solid #e4ebeb;
	}
	.panel-top {
		height: 26px;
		padding-top: 5px;
		background: #e6ecec;
	}
	.panel-tools {
		display: flex;
		align-items: center;
		gap: 5px;
		height: 32px;
		padding: 0 7px 0 9px;
	}
	.panel-tools button {
		width: 18px;
		height: 18px;
	}
	.panel-tools .expand {
		margin-left: auto;
		font-size: 16px;
		line-height: 14px;
	}
	.search {
		display: flex;
		align-items: center;
		height: 29px;
		gap: 3px;
	}
	.search-box {
		display: flex;
		width: 73px;
		height: 29px;
		border: solid #a9b5b5;
		border-width: 1px 1px 1px 0;
	}
	.search-box input {
		flex: 1;
		min-width: 0;
		border: 0;
	}
	.search-box button {
		width: 20px;
		color: #888;
		font-size: 18px;
		line-height: 24px;
	}
	.plus {
		display: flex;
		margin-left: 4px;
	}
	.tree {
		width: 116px;
		margin-top: 5px;
		overflow: hidden;
		border-bottom: 2px solid #62bf4e;
	}
	.tree-head, .tree-body {
		display: grid;
		grid-template-columns: 95px 1fr;
	}
	.tree-head {
		height: 22px;
		border-bottom: 1px solid #c8cccc;
		background: #fafafa;
		line-height: 24px;
	}
	.tree-head span:first-child {
		border-right: 1px solid #c8cccc;
	}
	.tree-head span:last-child {
		padding-left: 5px;
	}
	ul {
		margin: 0;
		padding: 0 0 7px;
		overflow: hidden;
		border-right: 1px solid #e6e8e8;
		list-style: none;
	}
	li {
		display: flex;
		align-items: center;
		height: 22px;
		margin-left: -13px;
		gap: 4px;
		white-space: nowrap;
	}
	.root {
		margin-left: -10px;
	}
	.deep {
		margin-left: 0;
		gap: 5px;
	}
	.deep::before {
		content: "";
		width: 5px;
		margin-right: -2px;
		border-top: 1px solid #ccc;
	}
	li .glyph {
		width: 16px;
		height: 16px;
	}
	li:not(.deep) .glyph {
		width: 18px;
	}

	.viewport {
		position: relative;
		flex: 1;
		min-width: 0;
		overflow: hidden;
	}
	.scene {
		display: block;
		width: 100%;
		height: 100%;
	}
	.solid {
		stroke: #1d2620;
		stroke-width: 1;
		stroke-opacity: 0.85;
		stroke-linejoin: round;
	}
	.axes {
		fill: none;
		stroke: #f2f25a;
		stroke-width: 1.2;
	}
	.diagonals {
		fill: none;
		stroke: #ffffc4;
		stroke-width: 1.5;
		stroke-dasharray: 1.5 2.5;
	}
	.outline {
		fill: none;
		stroke: #ffff28;
		stroke-width: 2;
	}
	.dimension {
		fill: none;
		stroke: #ffff28;
		stroke-width: 1.2;
	}
	.tag {
		fill: #2c332e;
		fill-opacity: 0.9;
	}
	.tag-text {
		fill: #ffff55;
		font-family: "Liberation Mono", monospace;
		font-size: 12px;
		text-anchor: middle;
	}
	.section-name {
		fill: #ffff28;
		font-size: 14px;
	}
	.watermark {
		font-family: "Noto Sans CJK SC", sans-serif;
		font-size: 40px;
		font-style: italic;
		font-weight: 400;
	}
	.site {
		fill: #8b9290;
		font-family: "Liberation Sans", sans-serif;
		font-size: 18px;
	}
	.view-tools {
		position: absolute;
		top: 7px;
		left: 639px;
		display: flex;
		padding: 0 2px;
		border: 1px solid #a9c4cf;
		background: #fff;
	}
	.view-tools button {
		display: flex;
		align-items: center;
		justify-content: center;
		width: 26px;
		height: 30px;
	}
	.edit-shadow {
		position: absolute;
		top: 335px;
		left: 1220px;
		width: 64px;
		height: 25px;
		background: #5a5b43;
	}
	.edit {
		position: absolute;
		top: 330px;
		left: 1226px;
		display: flex;
		width: 54px;
		height: 25px;
		padding: 3px 0 3px 3px;
		border: 1px solid #b0b4b4;
		background: #fff;
	}
	.edit input {
		width: 32px;
		padding: 0;
		border: 0;
		background: #444547;
		color: #fff;
		font-size: 12px;
	}
	.edit button {
		display: flex;
		align-items: center;
		justify-content: center;
		flex: 1;
		margin: -3px 0 -3px 2px;
		border-left: 1px solid #b0b4b4;
	}
	.edit button::before {
		content: "";
		border: 4px solid transparent;
		border-top-color: #555;
		border-bottom: 0;
	}
</style>
